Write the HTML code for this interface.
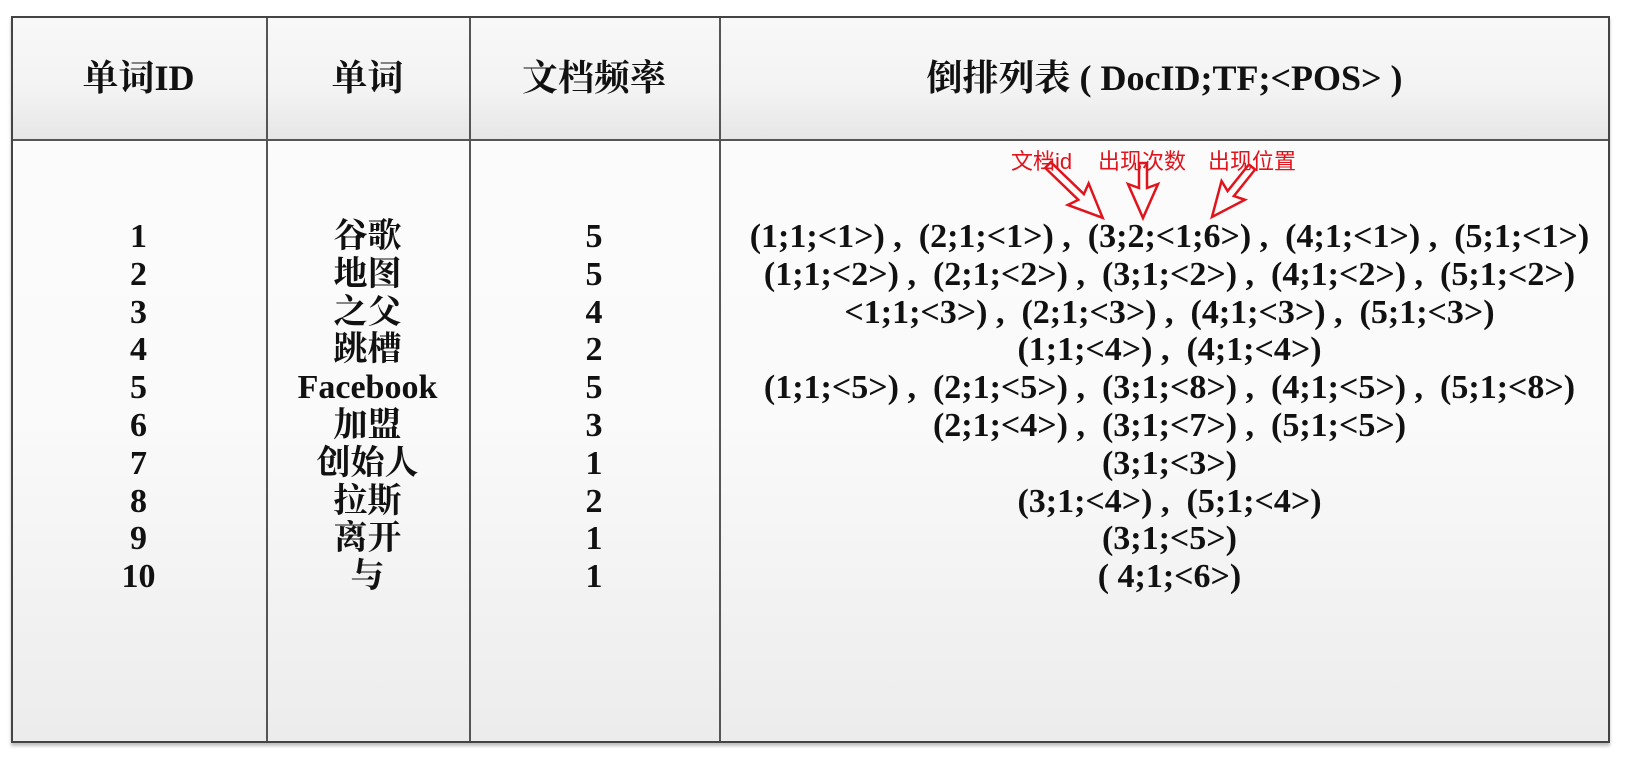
<!DOCTYPE html>
<html><head><meta charset="utf-8"><style>
html,body{margin:0;padding:0;}
body{width:1648px;height:759px;background:#fff;position:relative;overflow:hidden;font-family:"Liberation Serif","Noto Serif CJK SC",serif;font-weight:bold;color:#111;}
.tbl{position:absolute;left:11px;top:16px;width:1599px;height:727px;border:2px solid #444;box-sizing:border-box;background:linear-gradient(#fcfcfc,#fafafa 55%,#ececec);box-shadow:0 3px 3px rgba(0,0,0,.25);}
.hdr{position:absolute;left:0;top:0;right:0;height:121px;background:linear-gradient(#f8f8f8,#f3f3f3 60%,#e6e6e6);border-bottom:2px solid #555;}
.vl{position:absolute;top:0;bottom:0;width:2px;background:#555;}
.h{position:absolute;top:57px;font-size:36px;text-align:center;line-height:42px;white-space:pre;}
.col{position:absolute;text-align:center;font-size:34px;line-height:37.8px;top:218px;white-space:pre;}
.ann{position:absolute;font-family:"Liberation Sans","Noto Sans CJK SC",sans-serif;font-weight:normal;color:#e0141c;font-size:22px;top:144px;}
</style></head><body>
<div class="tbl">
 <div class="hdr"></div>
 <div class="vl" style="left:253px"></div>
 <div class="vl" style="left:456px"></div>
 <div class="vl" style="left:706px"></div>
</div>
<div class="h" style="left:11px;width:255px">单词ID</div>
<div class="h" style="left:266px;width:203px">单词</div>
<div class="h" style="left:469px;width:250px">文档频率</div>
<div class="h" style="left:719px;width:891px">倒排列表 ( DocID;TF;&lt;POS&gt; )</div>

<div class="col" style="left:11px;width:255px">1
2
3
4
5
6
7
8
9
10</div>
<div class="col" style="left:266px;width:203px">谷歌
地图
之父
跳槽
Facebook
加盟
创始人
拉斯
离开
与</div>
<div class="col" style="left:469px;width:250px">5
5
4
2
5
3
1
2
1
1</div>
<div class="col" style="left:724px;width:891px;font-size:34px">(1;1;&lt;1&gt;) ,  (2;1;&lt;1&gt;) ,  (3;2;&lt;1;6&gt;) ,  (4;1;&lt;1&gt;) ,  (5;1;&lt;1&gt;)
(1;1;&lt;2&gt;) ,  (2;1;&lt;2&gt;) ,  (3;1;&lt;2&gt;) ,  (4;1;&lt;2&gt;) ,  (5;1;&lt;2&gt;)
&lt;1;1;&lt;3&gt;) ,  (2;1;&lt;3&gt;) ,  (4;1;&lt;3&gt;) ,  (5;1;&lt;3&gt;)
(1;1;&lt;4&gt;) ,  (4;1;&lt;4&gt;)
(1;1;&lt;5&gt;) ,  (2;1;&lt;5&gt;) ,  (3;1;&lt;8&gt;) ,  (4;1;&lt;5&gt;) ,  (5;1;&lt;8&gt;)
(2;1;&lt;4&gt;) ,  (3;1;&lt;7&gt;) ,  (5;1;&lt;5&gt;)
(3;1;&lt;3&gt;)
(3;1;&lt;4&gt;) ,  (5;1;&lt;4&gt;)
(3;1;&lt;5&gt;)
( 4;1;&lt;6&gt;)</div>

<div class="ann" style="left:1011px">文档id</div>
<div class="ann" style="left:1098px">出现次数</div>
<div class="ann" style="left:1208px">出现位置</div>
<svg width="1648" height="759" style="position:absolute;left:0;top:0" fill="none" stroke="#e0141c" stroke-width="2.5" stroke-linejoin="miter">
 <polygon transform="translate(1048,165) rotate(-46)" points="-4,0 4,0 4,46 15,42 0,76 -15,42 -4,46"/>
 <polygon transform="translate(1143,163) rotate(0)" points="-4,0 4,0 4,25 15,21 0,55 -15,21 -4,25"/>
 <polygon transform="translate(1252,167) rotate(38.7)" points="-4,0 4,0 4,34 15,30 0,64 -15,30 -4,34"/>
</svg>
</body></html>
